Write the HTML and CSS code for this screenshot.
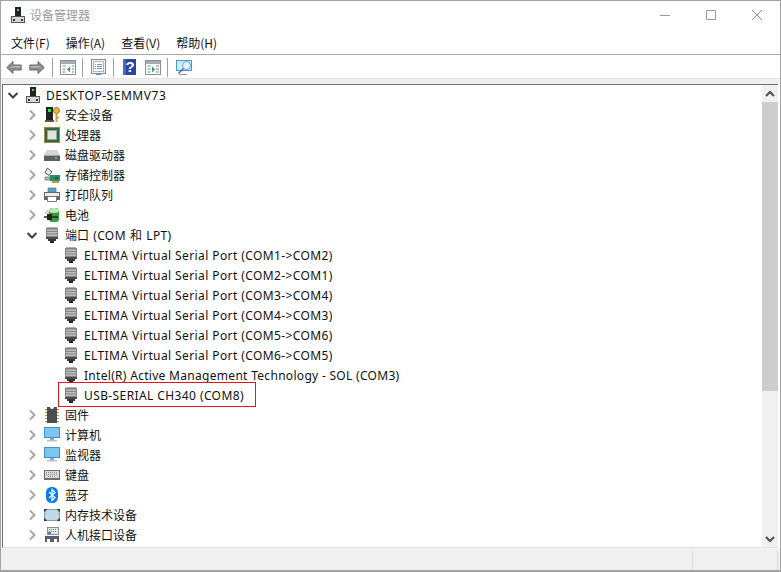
FILE: index.html
```html
<!DOCTYPE html>
<html lang="zh-CN">
<head>
<meta charset="utf-8">
<title>设备管理器</title>
<link rel="stylesheet" href="styles.css">
</head>
<body>
<svg class="defs" width="0" height="0" aria-hidden="true">
  <defs>
    <symbol id="i-right" viewBox="0 0 16 16"><path d="M6 3.500 10.500 8 6 12.500" fill="none" stroke="#a6a6a6" stroke-width="2"/></symbol>
    <symbol id="i-down" viewBox="0 0 16 16"><path d="M3.500 6 8 10.500 12.500 6" fill="none" stroke="#404040" stroke-width="2"/></symbol>
    <symbol id="i-pc" viewBox="0 0 16 16">
      <rect x="5" y="0" width="6" height="9" fill="#222"/><rect x="7" y="2" width="2" height="2" fill="#3fdc50"/>
      <rect x="1.500" y="9.500" width="13" height="6" fill="#d8d8d8" stroke="#555"/><rect x="3" y="12" width="2" height="2" fill="#333"/><rect x="11" y="12" width="2" height="2" fill="#333"/>
    </symbol>
    <symbol id="i-port" viewBox="0 0 14 16">
      <path d="M2 0h10v1H2z" fill="#b0b0b0"/><path d="M1 1h12v9H1z" fill="#858585"/>
      <path d="M2 2.500h10v1.500H2zM2 5h10v1.500H2zM2 7.500h10V9H2z" fill="#bdbdbd"/>
      <path d="M1 10h12v2H1z" fill="#4a4a4a"/><path d="M3 12h8v2H3z" fill="#383838"/><path d="M5 14h4v2H5z" fill="#222"/>
    </symbol>
    <symbol id="i-key" viewBox="0 0 16 16">
      <rect x="2" y="0" width="7" height="13" fill="#222"/><rect x="1" y="13" width="9" height="2" fill="#555"/><rect x="4" y="2" width="3" height="3" fill="#35e04a"/>
      <circle cx="12.500" cy="3.500" r="3" fill="#e9b44c" stroke="#a9761c"/><path d="M11.500 6h2v9h-2zM13.500 10h1.500v1.500h-1.500z" fill="#d29a36"/>
    </symbol>
    <symbol id="i-cpu" viewBox="0 0 16 16">
      <rect x="0" y="0" width="16" height="16" fill="#a88338"/><rect x="1" y="1" width="14" height="14" fill="#2e6a48"/><rect x="3.500" y="3.500" width="9" height="9" fill="#dfe5de" stroke="#9aa89c"/>
    </symbol>
    <symbol id="i-disk" viewBox="0 0 16 16">
      <path d="M3 3h10l3 5v3H0V8z" fill="#d4d4d4"/><path d="M0 8h16v6H0z" fill="#5f5f5f"/><path d="M0 8h16v1H0z" fill="#a8a8a8"/><rect x="11" y="10.500" width="2" height="1.500" fill="#45e45a"/>
    </symbol>
    <symbol id="i-storage" viewBox="0 0 16 16">
      <path d="M3.500 1 8 5 5 8.500 1 5.500z" fill="#e8e8e8" stroke="#555"/><path d="M1 10h5v3H1z" fill="#bbb" stroke="#666" stroke-width=".7"/>
      <rect x="6" y="8" width="10" height="6" fill="#2e8a68"/><path d="M8 14h7v2H8z" fill="#c49a3a"/><rect x="11" y="10" width="3" height="2" fill="#163"/>
    </symbol>
    <symbol id="i-printer" viewBox="0 0 16 16">
      <path d="M4 1h8v4H4z" fill="#4aa2d8" stroke="#777" stroke-width=".7"/><path d="M0 5h16v8H0z" fill="#666"/><path d="M1 6h14v3H1z" fill="#ececec"/><path d="M3.500 9.500h9v5h-9z" fill="#fff" stroke="#777"/>
    </symbol>
    <symbol id="i-battery" viewBox="0 0 16 16">
      <rect x="5" y="1" width="10" height="14" rx="3" fill="#3a9a3a"/><ellipse cx="10" cy="3.500" rx="5" ry="2.500" fill="#bfe8c0"/>
      <path d="M0 10h4" stroke="#222" stroke-width="1.500"/><path d="M3 7h5v6H3z" fill="#222"/><path d="M8 10h6" stroke="#222" stroke-width="1.500"/><path d="M3 3 5 6M1 5l3 2" stroke="#c9a22c"/>
    </symbol>
    <symbol id="i-chip" viewBox="0 0 14 16">
      <path d="M2 0h3a2 2 0 0 0 4 0h3v16H2z" fill="#4d4d4d"/><path d="M0 2h2v1H0zM0 5h2v1H0zM0 8h2v1H0zM0 11h2v1H0zM0 14h2v1H0zM12 2h2v1h-2zM12 5h2v1h-2zM12 8h2v1h-2zM12 11h2v1h-2zM12 14h2v1h-2z" fill="#b58a2c"/>
    </symbol>
    <symbol id="i-monitor" viewBox="0 0 16 16">
      <rect x="0" y="0" width="16" height="11" fill="#3f8fd2"/><rect x="1" y="1" width="14" height="9" fill="#7cc7ee"/><path d="M6 11h4v2H6z" fill="#9aa7b2"/><path d="M3 13h10v1.500H3z" fill="#b8c2ca"/>
    </symbol>
    <symbol id="i-keyboard" viewBox="0 0 16 10">
      <rect width="16" height="10" fill="#6e6e6e"/><rect x="1" y="1" width="14" height="7" fill="#d9d9d9"/>
      <path d="M2 2.500h12M2 4.500h12M4 6.500h8" stroke="#8c8c8c" stroke-dasharray="1 1"/>
    </symbol>
    <symbol id="i-bt" viewBox="0 0 12 16">
      <rect width="12" height="16" rx="5.500" fill="#0a78f0"/><path d="M3 5l6 5.500-3 3V2.500l3 3-6 5.500" fill="none" stroke="#fff" stroke-width="1.200"/>
    </symbol>
    <symbol id="i-mem" viewBox="0 0 16 12">
      <rect x=".5" y=".5" width="15" height="11" rx="1" fill="#c3d8e6" stroke="#8a9aa5"/><path d="M0 0h2.500v1.500H1.500v1H0zM13.500 0H16v2.500h-1.500v-1h-1zM0 12V9.500h1.500v1h1V12zM16 12V9.500h-1.500v1h-1V12z" fill="#333"/>
    </symbol>
    <symbol id="i-hid" viewBox="0 0 16 16">
      <rect x="3" y="0" width="12" height="8" fill="#8a8f96"/><rect x="4" y="1" width="10" height="6" fill="#e4e6e8"/>
      <path d="M5 2.500h8M5 4.500h8" stroke="#888" stroke-dasharray="1 1"/><rect x="4" y="5" width="3" height="2" fill="#2a82d6"/>
      <path d="M1 15V9h14v6h-2v-3h-3v3H6v-3H3v3z" fill="#5b6068"/>
    </symbol>
  </defs>
</svg>

<div class="window">
  <header class="titlebar">
    <svg class="title-icon"><use href="#i-pc"/></svg>
    <span class="title-text">设备管理器</span>
    <div class="caption-buttons">
      <svg class="cap" viewBox="0 0 12 12"><path d="M1 6.500h10" stroke="#999"/></svg>
      <svg class="cap" viewBox="0 0 12 12"><path d="M1.500 1.500h9v9h-9z" fill="none" stroke="#999"/></svg>
      <svg class="cap" viewBox="0 0 12 12"><path d="M1 1l10 10M11 1 1 11" stroke="#999"/></svg>
    </div>
  </header>

  <nav class="menubar">
    <span>文件(F)</span><span>操作(A)</span><span>查看(V)</span><span>帮助(H)</span>
  </nav>

  <div class="toolbar">
    <svg class="tb" viewBox="0 0 16 14"><path d="M.8 7 7 1v3.500h8.200v5H7V13z" fill="#8c8c8c" stroke="#6a6a6a"/><path d="M7 5.500h7.500v1.500H3z" fill="#bcbcbc"/></svg>
    <svg class="tb" viewBox="0 0 16 14"><path d="M15.200 7 9 1v3.500H.8v5H9V13z" fill="#8c8c8c" stroke="#6a6a6a"/><path d="M9 5.500H1.500v1.500H13z" fill="#bcbcbc"/></svg>
    <i class="sep"></i>
    <svg class="tb tight" viewBox="0 0 16 15"><rect x=".5" y=".5" width="15" height="14" fill="#fff" stroke="#8b9097"/><path d="M1 1h14v3H1z" fill="#a8adb4"/><path d="M2.500 6h3M2.500 9h3M2.500 12h3M12 6h2M12 9h2M12 12h2" stroke="#6d88a6"/><path d="M10 6.500v6l-3-3z" fill="#2aa84a"/></svg>
    <i class="sep"></i>
    <svg class="tb doc" viewBox="0 0 15 16"><rect x=".5" y=".5" width="14" height="14" fill="#f4f4f4" stroke="#8a8a8a"/><rect x="2.500" y="2.500" width="10" height="10" fill="#fff" stroke="#b5b5b5"/><path d="M4 5.500h1M6 5.500h5M4 7.500h1M6 7.500h5M4 9.500h1M6 9.500h5" stroke="#7f93a8"/><path d="M5 15.500h5" stroke="#39a0e0" stroke-width="1.500"/></svg>
    <i class="sep"></i>
    <svg class="tb help" viewBox="0 0 13 16"><rect width="13" height="16" fill="#2a45a8"/><rect x="0" y="0" width="3" height="16" fill="#4a68cc"/><text x="7" y="13" class="help-q">?</text></svg>
    <svg class="tb tight" viewBox="0 0 16 15"><rect x=".5" y=".5" width="15" height="14" fill="#fff" stroke="#8b9097"/><path d="M1 1h14v3H1z" fill="#a8adb4"/><path d="M2.500 6h3M2.500 9h3M2.500 12h3M11 6h3M11 9h3M11 12h3" stroke="#6d88a6"/><path d="M7 6.500v6l3-3z" fill="#2aa84a"/></svg>
    <i class="sep"></i>
    <svg class="tb scan" viewBox="0 0 16 15"><rect x=".5" y=".5" width="15" height="10" fill="#cfeafa" stroke="#3d9ad6"/><path d="M3 14.500h8" stroke="#8c9aa6"/><circle cx="10.500" cy="5.500" r="4" fill="#e6f5fd" stroke="#5fa8cf"/><path d="M7.500 8.500l-5 5" stroke="#5f6a72" stroke-width="1.500"/></svg>
  </div>

  <div class="strip"></div>

  <main class="pane">
    <div class="tree">
      <div class="row d0 wide"><svg class="tw"><use href="#i-down"/></svg><svg class="ic"><use href="#i-pc"/></svg><span>DESKTOP-SEMMV73</span></div>
      <div class="row d1"><svg class="tw"><use href="#i-right"/></svg><svg class="ic"><use href="#i-key"/></svg><span>安全设备</span></div>
      <div class="row d1"><svg class="tw"><use href="#i-right"/></svg><svg class="ic"><use href="#i-cpu"/></svg><span>处理器</span></div>
      <div class="row d1"><svg class="tw"><use href="#i-right"/></svg><svg class="ic"><use href="#i-disk"/></svg><span>磁盘驱动器</span></div>
      <div class="row d1"><svg class="tw"><use href="#i-right"/></svg><svg class="ic"><use href="#i-storage"/></svg><span>存储控制器</span></div>
      <div class="row d1"><svg class="tw"><use href="#i-right"/></svg><svg class="ic"><use href="#i-printer"/></svg><span>打印队列</span></div>
      <div class="row d1"><svg class="tw"><use href="#i-right"/></svg><svg class="ic"><use href="#i-battery"/></svg><span>电池</span></div>
      <div class="row d1 ports"><svg class="tw"><use href="#i-down"/></svg><svg class="ic"><use href="#i-port"/></svg><span>端口 <span class="latin">(COM</span> 和 <span class="latin">LPT)</span></span></div>
      <div class="row d2 latin"><i class="tw"></i><svg class="ic"><use href="#i-port"/></svg><span>ELTIMA Virtual Serial Port (COM1-&gt;COM2)</span></div>
      <div class="row d2 latin"><i class="tw"></i><svg class="ic"><use href="#i-port"/></svg><span>ELTIMA Virtual Serial Port (COM2-&gt;COM1)</span></div>
      <div class="row d2 latin"><i class="tw"></i><svg class="ic"><use href="#i-port"/></svg><span>ELTIMA Virtual Serial Port (COM3-&gt;COM4)</span></div>
      <div class="row d2 latin"><i class="tw"></i><svg class="ic"><use href="#i-port"/></svg><span>ELTIMA Virtual Serial Port (COM4-&gt;COM3)</span></div>
      <div class="row d2 latin"><i class="tw"></i><svg class="ic"><use href="#i-port"/></svg><span>ELTIMA Virtual Serial Port (COM5-&gt;COM6)</span></div>
      <div class="row d2 latin"><i class="tw"></i><svg class="ic"><use href="#i-port"/></svg><span>ELTIMA Virtual Serial Port (COM6-&gt;COM5)</span></div>
      <div class="row d2 intel"><i class="tw"></i><svg class="ic"><use href="#i-port"/></svg><span>Intel(R) Active Management Technology - SOL (COM3)</span></div>
      <div class="row d2 latin marked"><i class="tw"></i><svg class="ic"><use href="#i-port"/></svg><span>USB-SERIAL CH340 (COM8)</span></div>
      <div class="row d1"><svg class="tw"><use href="#i-right"/></svg><svg class="ic"><use href="#i-chip"/></svg><span>固件</span></div>
      <div class="row d1"><svg class="tw"><use href="#i-right"/></svg><svg class="ic"><use href="#i-monitor"/></svg><span>计算机</span></div>
      <div class="row d1"><svg class="tw"><use href="#i-right"/></svg><svg class="ic"><use href="#i-monitor"/></svg><span>监视器</span></div>
      <div class="row d1"><svg class="tw"><use href="#i-right"/></svg><svg class="ic"><use href="#i-keyboard"/></svg><span>键盘</span></div>
      <div class="row d1"><svg class="tw"><use href="#i-right"/></svg><svg class="ic"><use href="#i-bt"/></svg><span>蓝牙</span></div>
      <div class="row d1"><svg class="tw"><use href="#i-right"/></svg><svg class="ic"><use href="#i-mem"/></svg><span>内存技术设备</span></div>
      <div class="row d1"><svg class="tw"><use href="#i-right"/></svg><svg class="ic"><use href="#i-hid"/></svg><span>人机接口设备</span></div>
    </div>
    <div class="scrollbar">
      <div class="sb-btn"><svg viewBox="0 0 10 8"><path d="M1 6 5 2l4 4" fill="none" stroke="#505050" stroke-width="2"/></svg></div>
      <div class="sb-track"><div class="sb-thumb"></div></div>
      <div class="sb-btn"><svg viewBox="0 0 10 8"><path d="M1 2l4 4 4-4" fill="none" stroke="#505050" stroke-width="2"/></svg></div>
    </div>
  </main>

  <footer class="statusbar">
    <div class="st st-a"></div>
    <div class="st st-b"></div>
    <div class="st st-c"></div>
  </footer>
</div>
</body>
</html>
```

FILE: styles.css
```css
* { box-sizing: border-box; }
html, body { margin: 0; padding: 0; background: #fff; }
.defs { position: absolute; }
body {
  width: 781px;
  height: 572px;
  overflow: hidden;
  font-family: "Noto Sans", "Noto Sans CJK SC", sans-serif;
  font-size: 12px;
  color: #111;
}
.window {
  width: 781px;
  height: 572px;
  border: 1px solid #a3a3a3;
  border-bottom-width: 2px;
  display: flex;
  flex-direction: column;
  background: #fff;
}
.titlebar {
  height: 31px;
  display: flex;
  align-items: center;
  padding: 0 0 4px 9px;
  flex: none;
}
.title-icon { width: 16px; height: 16px; margin-right: 4px; }
.title-text { color: #9a9a9a; font-family: "Noto Sans CJK SC", sans-serif; }
.caption-buttons { margin-left: auto; display: flex; padding-right: 17px; gap: 34px; }
.cap { width: 12px; height: 12px; }
.menubar {
  height: 22px;
  flex: none;
  display: flex;
  gap: 16px;
  padding: 0 0 2px 10px;
  align-items: center;
  font-family: "Noto Sans CJK SC", sans-serif;
}
.toolbar {
  height: 24px;
  flex: none;
  border-top: 1px solid #a8a8a8;
  display: flex;
  align-items: center;
  padding: 1px 0 0 5px;
}
.tb { width: 16px; height: 15px; margin-right: 7px; flex: none; }
.tb.tight { margin-right: 6px; }
.tb.doc { width: 15px; height: 16px; margin-left: 1px; }
.tb.help { width: 13px; height: 16px; margin: 0 9px 0 2px; }
.help-q { font-family: "Liberation Sans", sans-serif; font-size: 15px; font-weight: 700; fill: #fff; text-anchor: middle; }
.tb.scan { margin-left: 1px; }
.sep { width: 1px; height: 19px; background: #a0a0a0; margin-right: 7px; flex: none; }
.strip { height: 6px; flex: none; background: #f0f0f0; border-top: 1px solid #e4e4e4; }
.pane {
  flex: 1;
  min-height: 0;
  display: flex;
  margin: 0 2px 0 1px;
  border-left: 1px solid #6f6f6f;
  border-top: 1px solid #6f6f6f;
  border-bottom: 1px solid #e3e3e3;
  overflow: hidden;
}
.tree { flex: 1; min-width: 0; overflow: hidden; }
.row {
  height: 20px;
  display: flex;
  align-items: center;
  white-space: nowrap;
  position: relative;
}
.d0 { padding-left: 2px; }
.d1 { padding-left: 21px; }
.d2 { padding-left: 40px; }
.latin { letter-spacing: .4px; }
.ports { word-spacing: 1px; }
.wide { letter-spacing: .53px; }
.intel { letter-spacing: .3px; }
.tw { width: 16px; height: 16px; margin-right: 4px; flex: none; display: block; }
.ic { width: 16px; height: 16px; margin-right: 5px; flex: none; }
.marked::after {
  content: "";
  position: absolute;
  left: 55px;
  top: -3px;
  width: 198px;
  height: 25px;
  box-sizing: border-box;
  border: 1px solid #e8141c;
}
.scrollbar { width: 16px; flex: none; display: flex; flex-direction: column; background: #f0f0f0; }
.sb-btn { height: 17px; flex: none; display: flex; align-items: center; justify-content: center; }
.sb-btn svg { width: 10px; height: 8px; }
.sb-track { flex: 1; min-height: 0; }
.sb-thumb { height: 289px; background: #cdcdcd; }
.statusbar {
  height: 22px;
  flex: none;
  background: #f0f0f0;
  display: flex;
  padding-top: 3px;
}
.st { height: 100%; }
.st-a { width: 692px; border-right: 1px solid #dcdcdc; }
.st-b { width: 85px; border-right: 1px solid #dcdcdc; }
.st-c { flex: 1; }
```
